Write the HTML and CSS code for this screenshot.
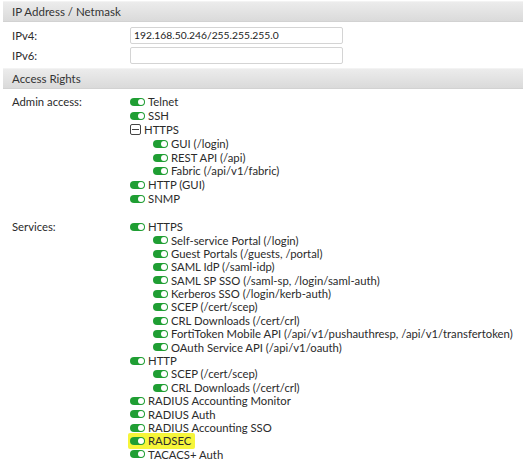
FILE: index.html
```html
<!DOCTYPE html>
<html>
<head>
<meta charset="utf-8">
<link rel="stylesheet" href="styles.css">
</head>
<body>
<div class="page">
  <div class="section-head">IP Address / Netmask</div>
  <div class="field-row">
    <div class="label">IPv4:</div>
    <div class="input">192.168.50.246/255.255.255.0</div>
  </div>
  <div class="field-row">
    <div class="label">IPv6:</div>
    <div class="input"></div>
  </div>
  <div class="section-head">Access Rights</div>

  <div class="group admin">
    <div class="label">Admin access:</div>
    <ul class="tree">
      <li><span class="tog"></span>Telnet</li>
      <li><span class="tog"></span>SSH</li>
      <li><span class="collapse"></span>HTTPS</li>
      <li class="sub">
        <ul class="tree">
          <li><span class="tog"></span>GUI (/login)</li>
          <li><span class="tog"></span>REST API (/api)</li>
          <li><span class="tog"></span>Fabric (/api/v1/fabric)</li>
        </ul>
      </li>
      <li><span class="tog"></span>HTTP (GUI)</li>
      <li><span class="tog"></span>SNMP</li>
    </ul>
  </div>

  <div class="group services">
    <div class="label">Services:</div>
    <ul class="tree">
      <li><span class="tog"></span>HTTPS</li>
      <li class="sub">
        <ul class="tree">
          <li><span class="tog"></span>Self-service Portal (/login)</li>
          <li><span class="tog"></span>Guest Portals (/guests, /portal)</li>
          <li><span class="tog"></span>SAML IdP (/saml-idp)</li>
          <li><span class="tog"></span>SAML SP SSO (/saml-sp, /login/saml-auth)</li>
          <li><span class="tog"></span>Kerberos SSO (/login/kerb-auth)</li>
          <li><span class="tog"></span>SCEP (/cert/scep)</li>
          <li><span class="tog"></span>CRL Downloads (/cert/crl)</li>
          <li><span class="tog"></span>FortiToken Mobile API (/api/v1/pushauthresp, /api/v1/transfertoken)</li>
          <li><span class="tog"></span>OAuth Service API (/api/v1/oauth)</li>
        </ul>
      </li>
      <li><span class="tog"></span>HTTP</li>
      <li class="sub">
        <ul class="tree">
          <li><span class="tog"></span>SCEP (/cert/scep)</li>
          <li><span class="tog"></span>CRL Downloads (/cert/crl)</li>
        </ul>
      </li>
      <li><span class="tog"></span>RADIUS Accounting Monitor</li>
      <li><span class="tog"></span>RADIUS Auth</li>
      <li><span class="tog"></span>RADIUS Accounting SSO</li>
      <li><span class="hl"><span class="tog"></span>RADSEC</span></li>
      <li><span class="tog"></span>TACACS+ Auth</li>
    </ul>
  </div>
</div>
</body>
</html>
```

FILE: styles.css
```css
* { box-sizing: border-box; }
html, body {
  margin: 0;
  padding: 0;
  background: #ffffff;
}
.page {
  width: 523px;
  height: 462px;
  overflow: hidden;
  padding-top: 1px;
  padding-left: 3px;
  font-family: Lato, "Liberation Sans", sans-serif;
  font-size: 11.3px;
  color: #2b2b2b;
}
.section-head {
  height: 21px;
  line-height: 20px;
  padding-left: 9px;
  background: linear-gradient(#ececec, #dadada);
  border-top: 1px solid #f3f3f3;
  border-bottom: 1px solid #d2d2d2;
  color: #333;
  font-size: 11.5px;
}
.field-row {
  display: flex;
  align-items: center;
  height: 20px;
  padding-left: 9px;
}
.section-head + .field-row { margin-top: 3px; }
.field-row + .section-head { margin-top: 3px; }
.label {
  width: 118px;
  flex: none;
}
.input {
  width: 213px;
  height: 17px;
  border: 1px solid #d4d4d4;
  border-radius: 2px;
  font-size: 10.3px;
  line-height: 15px;
  padding-left: 3px;
  color: #222;
  background: #fff;
}
.group {
  display: flex;
  align-items: flex-start;
  padding-left: 9px;
}
.group .label { line-height: 14px; }
.admin { margin-top: 6px; }
.admin li { height: 13.9px; line-height: 13.9px; }
.services { margin-top: 14px; }
.services li { height: 13.4px; line-height: 13.4px; }
.tree {
  list-style: none;
  margin: 0;
  padding: 0;
}
.tree li {
  display: flex;
  align-items: center;
  white-space: nowrap;
}
.tree li.sub { height: auto; display: block; }
.tree .tree { padding-left: 23px; }
.tog {
  position: relative;
  display: inline-block;
  flex: none;
  width: 15px;
  height: 8px;
  border-radius: 4px;
  background: #1f9e33;
  margin-right: 3px;
}
.tog::after {
  content: "";
  position: absolute;
  right: 1px;
  top: 1px;
  width: 6px;
  height: 6px;
  border-radius: 50%;
  background: #fff;
}
.collapse {
  position: relative;
  display: inline-block;
  flex: none;
  width: 11px;
  height: 11px;
  border: 1.3px solid #444;
  border-radius: 2px;
  margin-right: 3px;
}
.collapse::after {
  content: "";
  position: absolute;
  left: 1px;
  right: 1px;
  top: 3.5px;
  height: 1.3px;
  background: #444;
}
.hl {
  display: inline-flex;
  align-items: center;
  background: #f6f53a;
  margin-left: -2px;
  padding: 1px 4px 1px 2px;
  border-radius: 2px;
}
```
